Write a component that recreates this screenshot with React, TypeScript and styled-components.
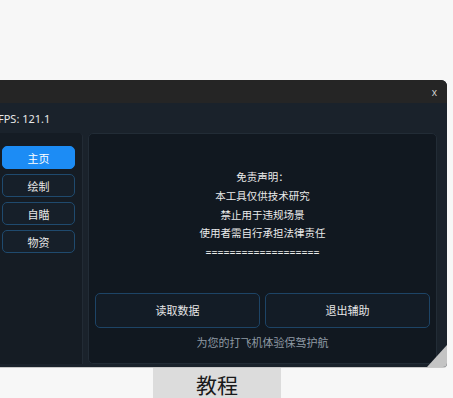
import React from "react";
import styled, {createGlobalStyle} from "styled-components";

const GlobalStyle = createGlobalStyle`
  html, body {
    margin: 0;
    padding: 0;
    background: #f7f7f7;
    overflow: hidden;
  }
  body {
    font-family: "Noto Sans", "Noto Sans CJK SC", sans-serif;
  }
`;

const Page = styled.div`
  width: 453px;
  height: 398px;
  padding-top: 80px;
  box-sizing: border-box;
  display: flex;
  flex-direction: column;
`;

const Window = styled.div`
  position: relative;
  margin-left: -8px;
  width: 455px;
  height: 288px;
  display: flex;
  flex-direction: column;
  background: #1a222b;
  border-radius: 0 6px 4px 0;
  overflow: hidden;
  box-shadow: 0 1px 0 #c8c8c8;
`;

const TitleBar = styled.div`
  height: 23px;
  flex-shrink: 0;
  background: #252525;
  display: flex;
  align-items: center;
  justify-content: flex-end;
  padding-right: 10px;
  color: #cfcfcf;
  font-size: 10px;
`;

const Body = styled.div`
  flex: 1;
  display: flex;
  flex-direction: column;
  padding: 8px 10px 3px 7px;
  min-height: 0;
`;

const Fps = styled.div`
  color: #e8e8e8;
  font-size: 11px;
  height: 22px;
  line-height: 16px;
  margin-left: -1px;
`;

const Columns = styled.div`
  flex: 1;
  display: flex;
  gap: 5px;
  min-height: 0;
`;

const Sidebar = styled.div`
  width: 84px;
  background: #151c24;
  border-right: 1px solid #222b35;
  border-radius: 0 4px 0 0;
  display: flex;
  flex-direction: column;
  gap: 5px;
  padding: 13px 0 0 3px;
  box-sizing: border-box;
`;

const NavButton = styled.div<{ $active?: boolean }>`
  width: 73px;
  height: 23px;
  box-sizing: border-box;
  border-radius: 5px;
  display: flex;
  align-items: center;
  justify-content: center;
  font-size: 11px;
  color: ${p => (p.$active ? "#ffffff" : "#e6e6e6")};
  background: ${p => (p.$active ? "#1c8cf5" : "#161f29")};
  border: 1px solid ${p => (p.$active ? "#1c8cf5" : "#1f4a6e")};
`;

const Main = styled.div`
  flex: 1;
  background: #111820;
  border: 1px solid #222c36;
  border-radius: 5px;
  display: flex;
  flex-direction: column;
  align-items: center;
  padding: 34px 6px 0;
`;

const Notice = styled.div`
  display: flex;
  flex-direction: column;
  align-items: center;
  color: #ebebeb;
  font-size: 10.5px;
  line-height: 18.8px;
`;

const Colon = styled.span`
  font-family: "Noto Sans CJK SC", sans-serif;
`;

const ActionRow = styled.div`
  width: 100%;
  display: flex;
  gap: 5px;
  margin-top: 31px;
`;

const ActionButton = styled.div`
  flex: 1;
  height: 35px;
  box-sizing: border-box;
  border: 1px solid #1d4466;
  border-radius: 5px;
  background: #131c26;
  display: flex;
  align-items: center;
  justify-content: center;
  color: #e6e6e6;
  font-size: 11px;
`;

const Footer = styled.div`
  margin-top: 6px;
  color: #8f9aa4;
  font-size: 11px;
`;

const Grip = styled.div`
  position: absolute;
  right: 0;
  bottom: 0;
  width: 0;
  height: 0;
  border-left: 20px solid transparent;
  border-bottom: 22px solid #c4c4c4;
`;

const Tutorial = styled.div`
  margin-left: 153px;
  width: 128px;
  height: 31px;
  background: #dcdcdc;
  display: flex;
  align-items: flex-start;
  justify-content: center;
  font-size: 21px;
  color: #1a1a1a;
  line-height: 30px;
  padding-top: 3px;
  box-sizing: border-box;
  overflow: hidden;
`;

const App: React.FC = () => {
    const tabs = ["主页", "绘制", "自瞄", "物资"];
    return (
        <Page>
            <GlobalStyle/>
            <Window>
                <TitleBar>x</TitleBar>
                <Body>
                    <Fps>FPS: 121.1</Fps>
                    <Columns>
                        <Sidebar>
                            {tabs.map((t, i) => (
                                <NavButton key={t} $active={i === 0}>{t}</NavButton>
                            ))}
                        </Sidebar>
                        <Main>
                            <Notice>
                                <span>免责声明<Colon>：</Colon></span>
                                <span>本工具仅供技术研究</span>
                                <span>禁止用于违规场景</span>
                                <span>使用者需自行承担法律责任</span>
                                <span>===================</span>
                            </Notice>
                            <ActionRow>
                                <ActionButton>读取数据</ActionButton>
                                <ActionButton>退出辅助</ActionButton>
                            </ActionRow>
                            <Footer>为您的打飞机体验保驾护航</Footer>
                        </Main>
                    </Columns>
                </Body>
                <Grip/>
            </Window>
            <Tutorial>教程</Tutorial>
        </Page>
    );
}

export default App
